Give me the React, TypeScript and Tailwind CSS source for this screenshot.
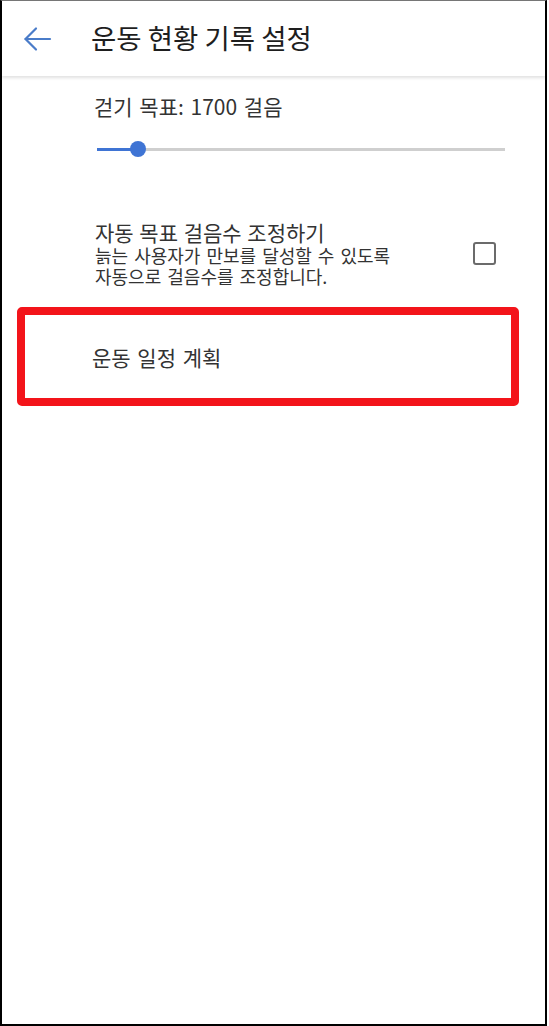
import React from "react";

export default function App() {
  return (
    <div
      className="w-[549px] h-[1026px] bg-white overflow-hidden"
      style={{ fontFamily: '"Noto Sans CJK KR", "Noto Sans", Roboto, sans-serif' }}
    >
      <div className="w-[547px] h-[1026px] border-l-2 border-r-2 border-b-2 border-t border-black border-t-[#777] flex flex-col">
        {/* Header */}
        <div className="h-[75px] flex items-center shadow-[0_2px_3px_rgba(0,0,0,0.12)] relative z-10 bg-white shrink-0">
          <div className="w-[89px] flex items-center pl-[21px]">
            <svg width="29" height="26" viewBox="0 0 29 26" fill="none" stroke="#4a7cc9" strokeWidth="2.2" strokeLinecap="round" strokeLinejoin="round">
              <path d="M2.5 13H27" />
              <path d="M13 2.5L2.5 13L13 23.5" />
            </svg>
          </div>
          <div className="text-[27.5px] text-[#1e1e1e] leading-none pb-[2px]">운동 현황 기록 설정</div>
        </div>

        {/* Walk goal */}
        <div className="pl-[92px] pt-[16px] text-[21px] leading-[28px] text-[#333] [word-spacing:2px]">걷기 목표: 1700 걸음</div>

        {/* Slider */}
        <div className="ml-[95px] mr-[40px] mt-[21px] h-[16px] relative flex items-center">
          <div className="h-[3px] w-full bg-[#cfcfcf]" />
          <div className="absolute left-0 h-[3px] w-[41px] bg-[#3f74d4]" />
          <div className="absolute left-[33px] w-[16px] h-[16px] rounded-full bg-[#3f74d4]" />
        </div>

        {/* Auto adjust */}
        <div className="flex items-center pl-[93px] pr-[49px] mt-[62px]">
          <div className="flex-1">
            <div className="text-[21px] leading-[26px] text-[#333] [word-spacing:1px]">자동 목표 걸음수 조정하기</div>
            <div className="text-[18px] leading-[21px] text-[#333] [word-spacing:2px]">
              늙는 사용자가 만보를 달성할 수 있도록
              <br />
              자동으로 걸음수를 조정합니다.
            </div>
          </div>
          <div className="w-[23px] h-[23px] border-2 border-[#6b6b6b] rounded-[3px]" />
        </div>

        {/* Highlighted row */}
        <div className="ml-[15px] mr-[26px] mt-[20px] h-[99px] border-[8px] border-[#f3141a] rounded-[5px] flex items-center pl-[67px]">
          <div className="text-[21px] leading-[28px] text-[#333] [word-spacing:2px]">운동 일정 계획</div>
        </div>
      </div>
    </div>
  );
}
